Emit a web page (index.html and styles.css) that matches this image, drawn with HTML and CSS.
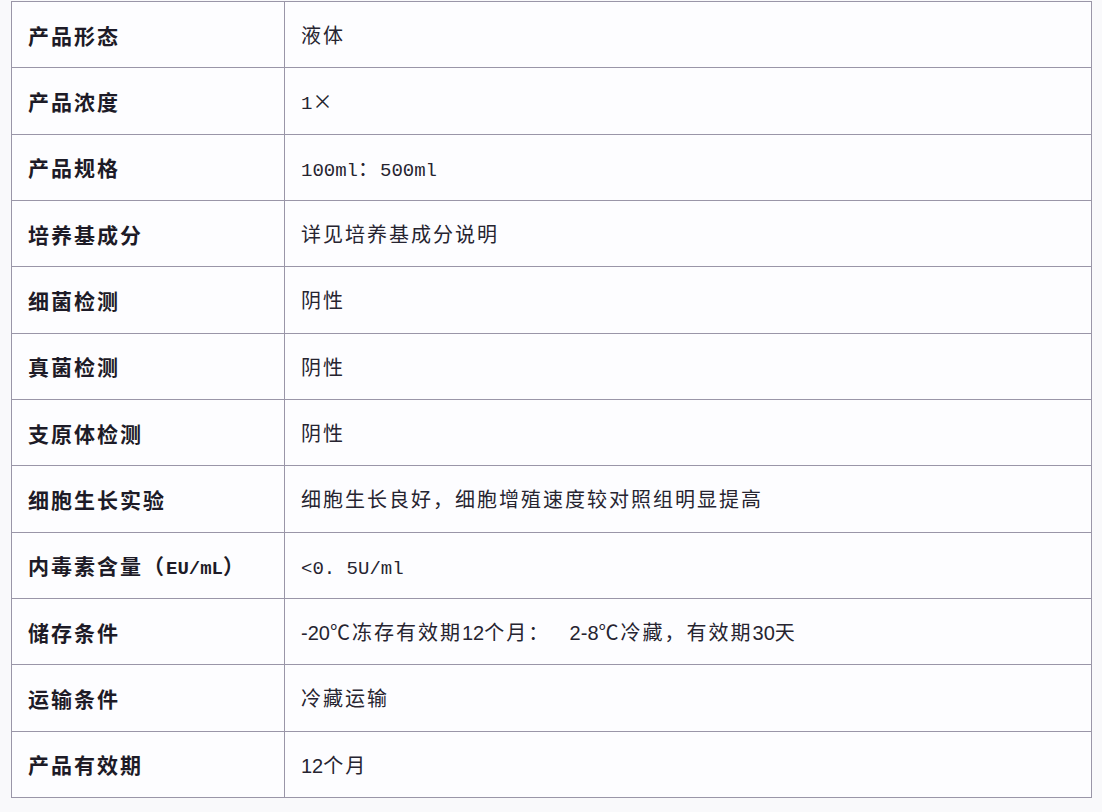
FILE: index.html
```html
<!DOCTYPE html>
<html lang="zh-CN">
<head>
<meta charset="utf-8">
<title>产品参数</title>
<link rel="stylesheet" href="styles.css">
</head>
<body>
<table class="spec">
  <tr><th>产品形态</th><td>液体</td></tr>
  <tr><th>产品浓度</th><td><span class="m">1</span>×</td></tr>
  <tr><th>产品规格</th><td><span class="m">100ml</span>：<span class="m">500ml</span></td></tr>
  <tr><th>培养基成分</th><td>详见培养基成分说明</td></tr>
  <tr><th>细菌检测</th><td>阴性</td></tr>
  <tr><th>真菌检测</th><td>阴性</td></tr>
  <tr><th>支原体检测</th><td>阴性</td></tr>
  <tr><th>细胞生长实验</th><td>细胞生长良好，细胞增殖速度较对照组明显提高</td></tr>
  <tr><th>内毒素含量（<span class="mb">EU/mL</span>）</th><td><span class="m">&lt;0. 5U/ml</span></td></tr>
  <tr><th>储存条件</th><td><span class="s">-20</span>℃冻存有效期<span class="s">12</span>个月：&nbsp;&nbsp; <span class="s">2-8</span>℃冷藏，有效期<span class="s">30</span>天</td></tr>
  <tr><th>运输条件</th><td>冷藏运输</td></tr>
  <tr><th>产品有效期</th><td><span class="s">12</span>个月</td></tr>
</table>
</body>
</html>
```

FILE: styles.css
```css
html, body {
  margin: 0;
  padding: 0;
  background: #f9f9fb;
}

body {
  padding: 1px 0 0 11px;
  font-family: "Noto Sans CJK SC", "Liberation Sans", sans-serif;
  color: #1d1b27;
}

.spec {
  border-collapse: collapse;
  width: 1081px;
  background: #fdfdff;
  table-layout: fixed;
}

.spec th,
.spec td {
  border: 1.5px solid #9a96a8;
  height: 66.33px;
  padding: 0 0 0 16px;
  text-align: left;
  vertical-align: middle;
  letter-spacing: 2px;
  white-space: nowrap;
  box-sizing: border-box;
}

.spec th {
  width: 273px;
  font-size: 21px;
  font-weight: 700;
}

.spec td {
  font-size: 20px;
  font-weight: 400;
  color: #262430;
}

.m {
  font-family: "Liberation Mono", monospace;
  font-size: 19px;
  letter-spacing: 0;
}

.mb {
  font-family: "Liberation Mono", monospace;
  font-size: 19px;
  font-weight: 700;
  letter-spacing: 0;
}

.s {
  font-family: "Liberation Sans", sans-serif;
  font-size: 20px;
  letter-spacing: 0;
}
```
